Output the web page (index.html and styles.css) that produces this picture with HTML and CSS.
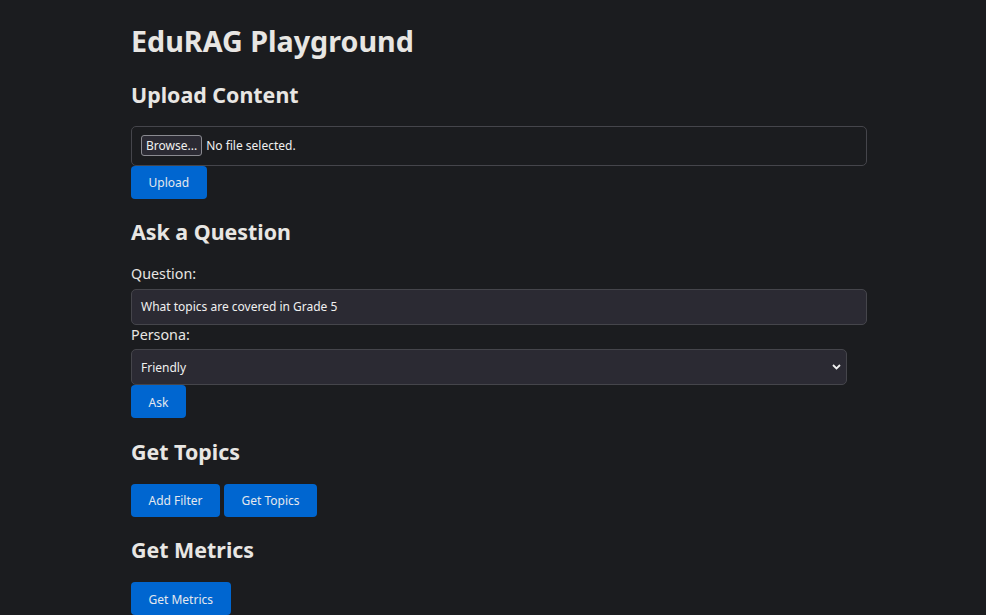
FILE: index.html
```html
<!DOCTYPE html>
<html lang="en">
<head>
<meta charset="utf-8">
<title>EduRAG Playground</title>
<link rel="stylesheet" href="styles.css">
</head>
<body>
<main class="page">
  <h1 class="title">EduRAG Playground</h1>

  <h2 class="section first">Upload Content</h2>
  <div class="file-input">
    <span class="browse">Browse...</span>
    <span class="file-name">No file selected.</span>
  </div>
  <button class="btn">Upload</button>

  <h2 class="section">Ask a Question</h2>
  <label class="label">Question:</label>
  <div class="text-input">What topics are covered in Grade 5</div>
  <label class="label">Persona:</label>
  <div class="select">
    <span>Friendly</span>
    <svg class="chev" width="9" height="6" viewBox="0 0 9 6"><path d="M1 1 L4.5 4.5 L8 1" fill="none" stroke="#f0f0f0" stroke-width="1.8"/></svg>
  </div>
  <button class="btn">Ask</button>

  <h2 class="section">Get Topics</h2>
  <div class="btn-row">
    <button class="btn">Add Filter</button>
    <button class="btn">Get Topics</button>
  </div>

  <h2 class="section">Get Metrics</h2>
  <button class="btn">Get Metrics</button>
</main>
</body>
</html>
```

FILE: styles.css
```css
html, body {
  margin: 0;
  padding: 0;
  background: #1b1c1f;
}
body {
  color: #e8e6e3;
  font-family: "Noto Sans", "Open Sans", sans-serif;
}
.page {
  box-sizing: border-box;
  max-width: 724px;
  padding-right: 8px;
  margin: 0 auto;
  display: flex;
  flex-direction: column;
  align-items: flex-start;
}
.title {
  margin: 23px 0 0;
  font-size: 28.7px;
  line-height: 36px;
  font-weight: 700;
}
.section {
  margin: 19.6px 0 18px;
  font-size: 21.4px;
  line-height: 28px;
  font-weight: 700;
}
.section.first {
  margin-top: 21.7px;
  margin-bottom: 17px;
}
.file-input {
  box-sizing: border-box;
  width: 736px;
  height: 40px;
  border: 1px solid #45454b;
  border-radius: 5px;
  padding: 0 9px;
  display: flex;
  align-items: center;
  gap: 4px;
  font-size: 12px;
}
.browse {
  box-sizing: border-box;
  height: 21px;
  padding: 0 4px;
  border: 1px solid #8a8a90;
  border-radius: 3px;
  background: #2b2a33;
  display: flex;
  align-items: center;
  color: #f0f0f0;
}
.file-name {
  color: #f0f0f0;
}
.btn {
  box-sizing: border-box;
  height: 33px;
  padding: 1px 17.5px 0;
  border: none;
  border-radius: 4px;
  background: #0066d0;
  color: #e4e8ee;
  font-family: "Noto Sans", "Open Sans", sans-serif;
  font-size: 12px;
  cursor: pointer;
}
.btn-row {
  display: flex;
  gap: 4px;
}
.label {
  font-size: 14.3px;
  line-height: 20px;
  margin-bottom: 4.5px;
}
.text-input,
.select {
  box-sizing: border-box;
  height: 36px;
  border: 1px solid #45454b;
  border-radius: 5px;
  background: #2b2a33;
  padding: 0 9px;
  display: flex;
  align-items: center;
  font-size: 12px;
  color: #f0f0f0;
}
.text-input {
  width: 736px;
}
.select {
  width: 716px;
  justify-content: space-between;
  padding-right: 5px;
}
```
